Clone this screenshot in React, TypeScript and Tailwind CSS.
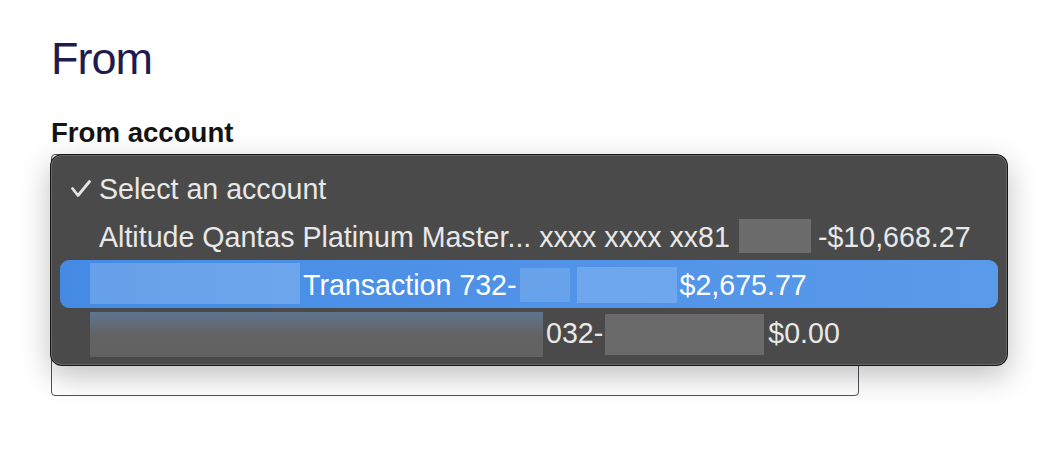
import React from "react";

function Check() {
  return (
    <svg width="20" height="18" viewBox="0 0 20 18" className="block">
      <polyline
        points="1.5,8.5 7,15.5 18.5,1.5"
        fill="none"
        stroke="#e4e4e4"
        strokeWidth="2.8"
        strokeLinecap="round"
        strokeLinejoin="round"
      />
    </svg>
  );
}

// blurred-out bits of the account numbers
function Smudge({ className }: { className: string }) {
  return <span className={`inline-block shrink-0 ${className}`} />;
}

export default function App() {
  return (
    <div className="min-h-screen bg-white pl-[51px] pt-[36px] font-['Liberation_Sans',Arial,sans-serif]">
      <h1 className="text-[45px] leading-none tracking-[-1px] text-[#1f1b4e]">From</h1>

      <div className="mt-[38px] text-[27.6px] font-bold leading-none text-[#141414]">From account</div>

      <div className="relative mt-[7px] h-[242px] w-[808px] rounded-[4px] border border-[#505058] bg-white">
        {/* open native dropdown */}
        <div className="absolute left-[-2px] top-[-1px] w-[958px] rounded-[12px] border border-black/70 bg-[#4a4a4a] p-[9px] shadow-[inset_0_0_0_1px_rgba(255,255,255,0.16),0_10px_30px_rgba(0,0,0,0.25)] text-[28.6px] leading-none text-[#e8e8e8]">
          <div className="flex h-[48px] items-center pl-[11px] pt-[3px]">
            <span className="w-[28px] shrink-0">
              <Check />
            </span>
            <span>Select an account</span>
          </div>

          <div className="flex h-[48px] items-center pl-[39px] pt-[3px] whitespace-nowrap">
            <span>Altitude Qantas Platinum Master... xxxx xxxx xx81</span>
            <Smudge className="-mt-[3px] ml-[9px] h-[34px] w-[72px] bg-[#6c6c6c]" />
            <span className="ml-[7px]">-$10,668.27</span>
          </div>

          <div className="flex h-[48px] items-center rounded-[9px] bg-gradient-to-r from-[#458be5] to-[#5a9aea] pl-[30px] pt-[3px] whitespace-nowrap text-white">
            <Smudge className="-mt-[3px] h-[41px] w-[210px] bg-gradient-to-r from-[#67a0ea] to-[#6da6ec]" />
            <span className="ml-[3px]">Transaction 732-</span>
            <Smudge className="ml-[3px] h-[34px] w-[50px] bg-[#68a2eb]" />
            <Smudge className="ml-[7px] h-[36px] w-[100px] bg-[#6ea7ed]" />
            <span className="ml-[3px]">$2,675.77</span>
          </div>

          <div className="flex h-[48px] items-center pl-[30px] pt-[3px] whitespace-nowrap">
            <Smudge className="mt-[3px] h-[45px] w-[453px] bg-gradient-to-b from-[#5e7590] via-[#636363] to-[#616161]" />
            <span className="ml-[3px]">032-</span>
            <Smudge className="ml-[2px] mt-[3px] h-[41px] w-[159px] bg-[#6a6a6a]" />
            <span className="ml-[4px]">$0.00</span>
          </div>
        </div>
      </div>
    </div>
  );
}
